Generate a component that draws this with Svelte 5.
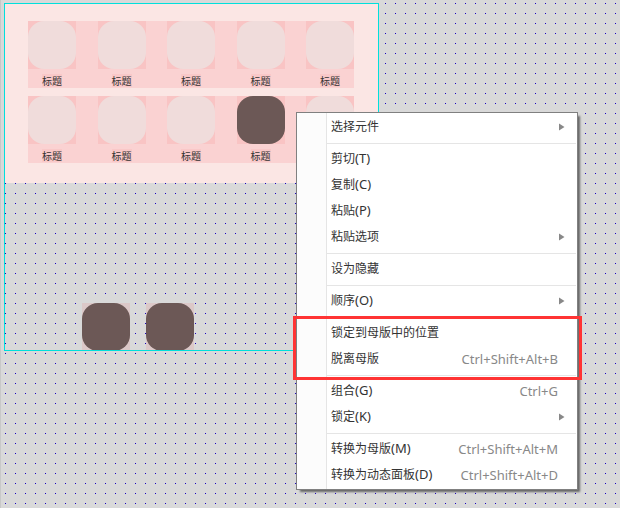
<script lang="ts">
  type Item = {
    label: string;
    key?: string;
    shortcut?: string;
    submenu?: boolean;
  };

  type Group = { marked?: boolean; items: Item[] };

  const rows = [
    ["标题", "标题", "标题", "标题", "标题"],
    ["标题", "标题", "标题", "标题", ""],
  ];

  let selected = $state("1-3");

  const groups: Group[] = [
    { items: [{ label: "选择元件", submenu: true }] },
    {
      items: [
        { label: "剪切", key: "T" },
        { label: "复制", key: "C" },
        { label: "粘贴", key: "P" },
        { label: "粘贴选项", submenu: true },
      ],
    },
    { items: [{ label: "设为隐藏" }] },
    { items: [{ label: "顺序", key: "O", submenu: true }] },
    {
      marked: true,
      items: [
        { label: "锁定到母版中的位置" },
        { label: "脱离母版", shortcut: "Ctrl+Shift+Alt+B" },
      ],
    },
    {
      items: [
        { label: "组合", key: "G", shortcut: "Ctrl+G" },
        { label: "锁定", key: "K", submenu: true },
      ],
    },
    {
      items: [
        { label: "转换为母版", key: "M", shortcut: "Ctrl+Shift+Alt+M" },
        { label: "转换为动态面板", key: "D", shortcut: "Ctrl+Shift+Alt+D" },
      ],
    },
  ];
</script>

<main class="canvas">
  <section class="frame">
    <div class="master">
      {#each rows as titles, row (row)}
        <div class="row">
          {#each titles as title, column (column)}
            <button
              class="cell"
              onclick={() => (selected = `${row}-${column}`)}
            >
              <span class="tile">
                <span class="shape" class:dark={selected === `${row}-${column}`}
                ></span>
              </span>
              <span class="caption">{title}</span>
            </button>
          {/each}
        </div>
      {/each}
    </div>
    <div class="loose">
      <span class="tile faded"><span class="shape dark"></span></span>
      <span class="tile faded"><span class="shape dark"></span></span>
    </div>
  </section>

  <div class="menu" role="menu">
    {#each groups as group, i (i)}
      <div class="group" class:marked={group.marked} role="group">
        {#each group.items as item (item.label)}
          <button class="item" role="menuitem">
            <span class="label"
              >{item.label}{#if item.key}<span class="latin">({item.key})</span
                >{/if}</span
            >
            {#if item.shortcut}
              <span class="latin shortcut">{item.shortcut}</span>
            {/if}
            {#if item.submenu}
              <svg class="arrow" width="6" height="8" viewBox="0 0 6 8">
                <path d="M0 0.5L5.5 4L0 7.5Z" fill="#888" />
              </svg>
            {/if}
          </button>
        {/each}
      </div>
    {/each}
  </div>
</main>

<style>
  :global(body) {
    margin: 0;
  }

  .canvas {
    position: relative;
    box-sizing: border-box;
    min-height: 100vh;
    overflow: hidden;
    border-left: 1px solid #c8c8c8;
    background-color: #d9d9d9;
    background-image: conic-gradient(at 1px 1px, transparent 75%, #1400c0 0);
    background-size: 10px 10px;
    background-position: 4px 3px;
    font-family: "Noto Sans", "Noto Sans CJK SC", sans-serif;
    color: #333;
  }

  button {
    margin: 0;
    padding: 0;
    border: none;
    background: none;
    font: inherit;
    color: inherit;
    cursor: pointer;
  }

  .frame {
    position: absolute;
    left: 3px;
    top: 3px;
    width: 375px;
  }

  /* outline sits over the shapes that touch the bottom edge */
  .frame::after {
    content: "";
    position: absolute;
    inset: 0;
    border: 1px solid #00e0dc;
    pointer-events: none;
  }

  .master {
    display: flex;
    flex-direction: column;
    gap: 8px;
    padding: 18px 25px 20px 24px;
    background: #fbe6e4;
  }

  .row {
    display: flex;
    justify-content: space-between;
    background: #fad2d2;
  }

  .cell {
    display: flex;
    flex-direction: column;
    align-items: center;
    gap: 5px;
    padding-bottom: 1px;
  }

  .tile {
    display: block;
    width: 48px;
    height: 48px;
    background: #f9c4c4;
  }

  .tile.faded {
    background: #dcc8c8;
  }

  .shape {
    display: block;
    height: 100%;
    border-radius: 16px;
    background: #f0dcdb;
  }

  .shape.dark {
    background: #6c5856;
  }

  .caption {
    min-height: 13px;
    background: #f9c8c8;
    font-family: "Noto Sans CJK SC", sans-serif;
    font-size: 10px;
    line-height: 13px;
  }

  .loose {
    display: flex;
    gap: 16px;
    padding: 120px 0 0 78px;
  }

  .menu {
    position: absolute;
    left: 295px;
    top: 112px;
    min-width: 280px;
    padding: 1px 0;
    border: 1px solid #808080;
    background: linear-gradient(
      to right,
      #fcfcfc 29px,
      #e5e5e5 29px 30px,
      #fff 30px
    );
    box-shadow: 3px 3px 2px -1px #666;
  }

  .group {
    position: relative;
  }

  .group + .group {
    padding-top: 6px;
  }

  .group + .group::before {
    content: "";
    position: absolute;
    top: 3px;
    left: 30px;
    right: 1px;
    height: 1px;
    background: #e5e5e5;
  }

  .marked::after {
    content: "";
    position: absolute;
    z-index: 1;
    inset: 2px -5px -8px -4px;
    border: 3px solid #ff3434;
    pointer-events: none;
  }

  .item {
    display: flex;
    align-items: center;
    justify-content: space-between;
    box-sizing: border-box;
    width: 100%;
    height: 26px;
    padding: 0 12px 0 34px;
    font-size: 12px;
    line-height: 18px;
    text-align: left;
  }

  .item:hover {
    background: rgba(0, 0, 0, 0.04);
  }

  .label {
    padding-bottom: 2px;
    font-family: "Noto Sans CJK SC", sans-serif;
    white-space: nowrap;
  }

  .latin {
    font-family: "Noto Sans", sans-serif;
    font-size: 13px;
  }

  .shortcut {
    margin: 0 7px 0 20px;
    color: #888;
  }

  .arrow {
    display: block;
  }
</style>
